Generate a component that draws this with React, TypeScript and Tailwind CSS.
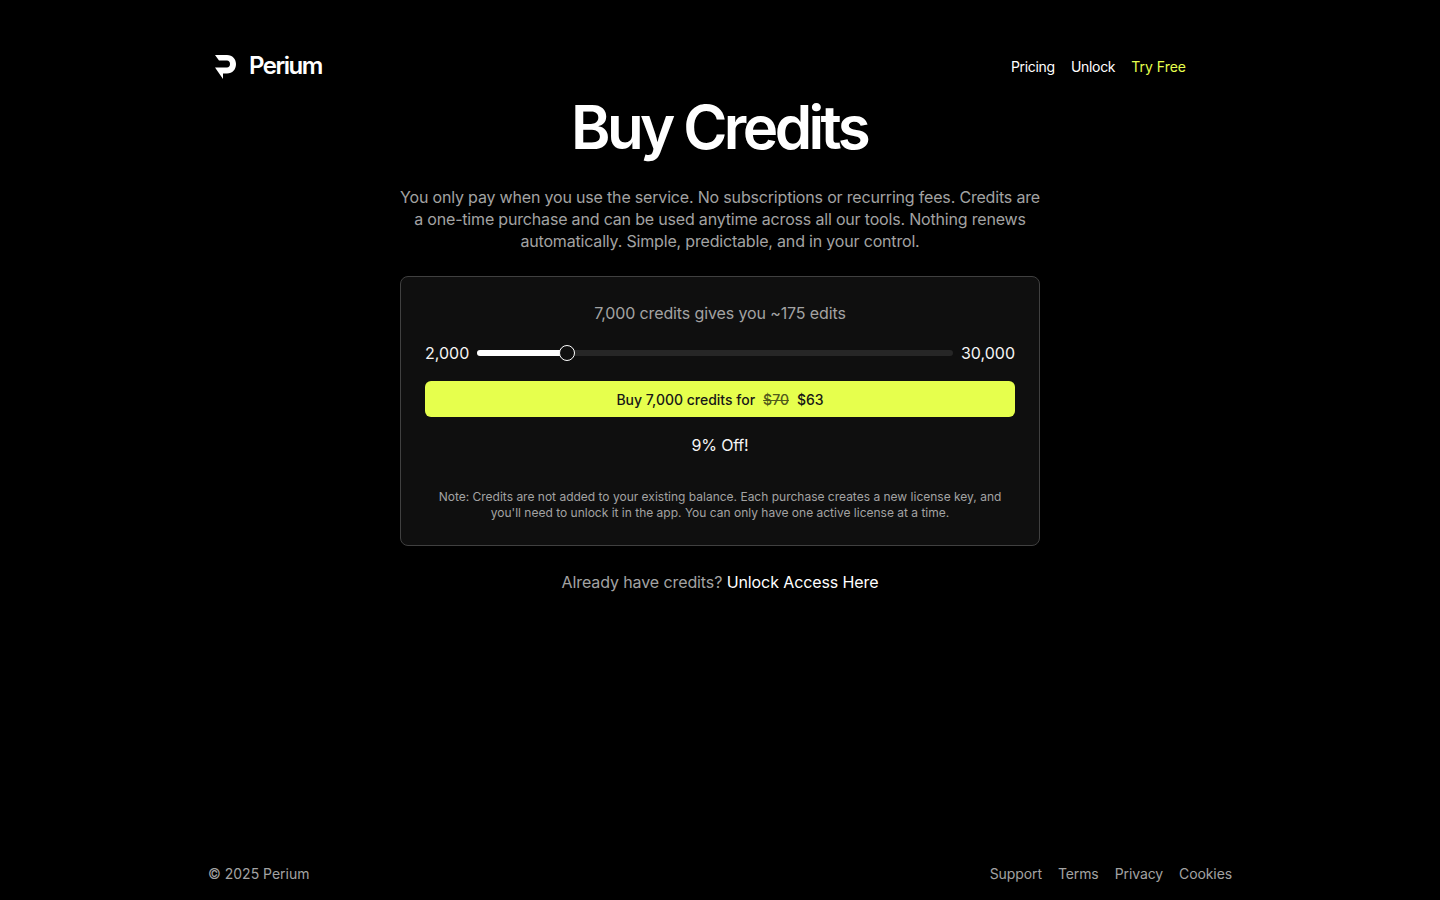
export default function App() {
  return (
    <div className="min-h-[900px] bg-black text-white flex flex-col font-['Inter',sans-serif]">
      <div className="w-[1024px] mx-auto flex-1 flex flex-col">
        <header className="h-[97px] pt-[52px] pl-[6px] pr-[46px] flex items-start justify-between">
          <div className="flex items-center gap-[11px] h-[28px]">
            <svg width="24" height="26" viewBox="0 0 24 26" className="mt-[2px]">
              <path fill="#fff" d="M1 1H13C18.500 1 22 5 22 10C22 15.500 18.500 19.500 13 19.500H9V25L1 13.500H13C14.800 13.500 16 12 16 10C16 8 14.800 6.500 13 6.500H5Z" />
            </svg>
            <span className="text-[24px] leading-[28px] font-semibold tracking-[-1.5px]">Perium</span>
          </div>
          <nav className="flex gap-[16px] text-[14px] leading-[30px]">
            <a className="tracking-[-0.3px]">Pricing</a>
            <a className="tracking-[-0.3px]">Unlock</a>
            <a className="text-[#e6ff4d]">Try Free</a>
          </nav>
        </header>
        <main className="flex flex-col items-center">
          <h1 className="mr-[2px] text-[60px] leading-[60px] font-semibold tracking-[-3.6px]">Buy Credits</h1>
          <p className="w-[640px] mt-[29px] text-center text-[16px] leading-[22px] tracking-[-0.18px] text-[#a3a3a3]">You only pay when you use the service. No subscriptions or recurring fees. Credits are a one-time purchase and can be used anytime across all our tools. Nothing renews automatically. Simple, predictable, and in your control.</p>
          <section className="w-[640px] h-[270px] mt-[24px] bg-[#0f0f0f] border border-[#404040] rounded-[8px] px-[24px] pt-[26px] flex flex-col">
            <p className="text-center text-[16px] leading-[20px] tracking-[-0.12px] text-[#a3a3a3]">7,000 credits gives you ~175 edits</p>
            <div className="mt-[20px] flex items-center gap-[8px] text-[16px] leading-[20px] text-[#f5f5f5]">
              <span>2,000</span>
              <div className="relative flex-1 h-[6px] rounded-full bg-[#262626]">
                <div className="h-full w-[90px] rounded-full bg-white" />
                <div className="absolute left-[82px] top-[-5px] w-[16px] h-[16px] rounded-full bg-[#0f0f0f] border border-white" />
              </div>
              <span>30,000</span>
            </div>
            <button className="mt-[18px] h-[36px] rounded-[6px] bg-[#e6ff4d] text-[#171717] text-[14px] font-medium flex items-center justify-center gap-[8px]">
              <span>Buy 7,000 credits for</span>
              <span className="line-through text-[#525b1c]">$70</span>
              <span>$63</span>
            </button>
            <p className="mt-[18px] text-center text-[16px] leading-[20px] tracking-[-0.2px] text-[#f5f5f5]">9% Off!</p>
            <p className="mt-[34px] text-center text-[12px] leading-[16px] text-[#a3a3a3]">Note: Credits are not added to your existing balance. Each purchase creates a new license key, and you'll need to unlock it in the app. You can only have one active license at a time.</p>
          </section>
          <p className="mt-[25px] text-[16px] leading-[22px] tracking-[-0.1px] text-[#a3a3a3]">Already have credits? <a className="text-white">Unlock Access Here</a></p>
        </main>
        <footer className="mt-auto h-[36px] flex justify-between text-[14px] leading-[20px] text-[#a3a3a3]">
          <span>© 2025 Perium</span>
          <nav className="flex gap-[16px] tracking-[-0.1px]">
            <a>Support</a>
            <a>Terms</a>
            <a>Privacy</a>
            <a>Cookies</a>
          </nav>
        </footer>
      </div>
    </div>
  );
}
